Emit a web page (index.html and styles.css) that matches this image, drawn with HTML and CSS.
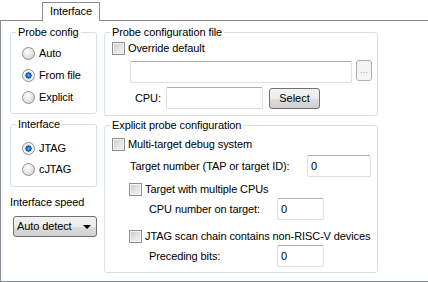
FILE: index.html
```html
<!DOCTYPE html>
<html lang="en">
<head>
    <meta charset="UTF-8">
    <title>Interface</title>
    <link rel="stylesheet" href="styles.css">
</head>
<body>
    <div class="tabbar">
        <div class="tab-gap"></div>
        <div class="tab">Interface</div>
        <div class="tab-fill"></div>
    </div>
    <div class="panel">
        <div class="col-left">
            <fieldset class="group probe-config">
                <legend>Probe config</legend>
                <label class="radio-row"><input type="radio" name="cfg" class="radio">Auto</label>
                <label class="radio-row"><input type="radio" name="cfg" class="radio" checked>From file</label>
                <label class="radio-row"><input type="radio" name="cfg" class="radio">Explicit</label>
            </fieldset>
            <fieldset class="group iface">
                <legend>Interface</legend>
                <label class="radio-row short"><input type="radio" name="iface" class="radio" checked>JTAG</label>
                <label class="radio-row short"><input type="radio" name="iface" class="radio">cJTAG</label>
            </fieldset>
            <div class="speed-label">Interface speed</div>
            <div class="dropdown">
                <span>Auto detect</span>
                <span class="arrow"></span>
            </div>
        </div>
        <div class="col-right">
            <fieldset class="group file-group">
                <legend>Probe configuration file</legend>
                <label class="check-row override"><input type="checkbox" class="check">Override default</label>
                <div class="path-row">
                    <input type="text" class="textbox path">
                    <button type="button" class="btn dots">...</button>
                </div>
                <div class="cpu-row">
                    <span class="cpu-label">CPU:</span>
                    <input type="text" class="textbox cpu">
                    <button type="button" class="btn select-btn">Select</button>
                </div>
            </fieldset>
            <fieldset class="group explicit-group">
                <legend>Explicit probe configuration</legend>
                <label class="check-row multi"><input type="checkbox" class="check">Multi-target debug system</label>
                <div class="field-row target-num">
                    <span class="field-label">Target number (TAP or target ID):</span>
                    <input type="text" class="textbox num wide" value="0">
                </div>
                <label class="check-row sub first-sub"><input type="checkbox" class="check">Target with multiple CPUs</label>
                <div class="field-row sub-field">
                    <span class="field-label">CPU number on target:</span>
                    <input type="text" class="textbox num" value="0">
                </div>
                <label class="check-row sub second-sub"><input type="checkbox" class="check">JTAG scan chain contains non-RISC-V devices</label>
                <div class="field-row sub-field">
                    <span class="field-label">Preceding bits:</span>
                    <input type="text" class="textbox num" value="0">
                </div>
            </fieldset>
        </div>
    </div>
</body>
</html>
```
FILE: styles.css
```css
body {
    margin: 0;
    width: 428px;
    height: 282px;
    overflow: hidden;
    background: #fff;
    font-family: "Liberation Sans", Arial, sans-serif;
    font-size: 11px;
    line-height: 13px;
    letter-spacing: -0.1px;
    color: #000;
}

* {
    box-sizing: border-box;
}

/* tab strip */
.tabbar {
    display: flex;
    height: 21px;
}

.tab-gap {
    width: 42px;
    border-bottom: 1px solid #898c95;
}

.tab {
    margin-top: 2px;
    width: 58px;
    height: 19px;
    border: 1px solid #898c95;
    border-bottom: none;
    text-align: center;
    line-height: 17px;
    background: #fff;
}

.tab-fill {
    flex: 1;
    border-bottom: 1px solid #898c95;
}

.panel {
    display: flex;
    height: 261px;
    padding-left: 9px;
    border-left: 1px solid #898c95;
    border-bottom: 1px solid #898c95;
}

.col-left {
    width: 87px;
    margin-right: 7px;
}

.col-right {
    width: 274px;
}

/* group boxes */
.group {
    margin: 0;
    padding: 0;
    border: 1px solid #d5dfe5;
    border-radius: 3px;
    min-width: 0;
}

.group legend {
    margin-left: 5px;
    padding: 0 2px;
    line-height: 13px;
}

.probe-config {
    margin-top: 5px;
    padding: 3px 0 5px 0;
}

.iface {
    margin-top: 4px;
    padding: 7px 0 6px 0;
}

.radio-row {
    display: flex;
    align-items: center;
    height: 22px;
    padding-left: 11px;
}

.radio-row.short {
    height: 21px;
}

.radio {
    appearance: none;
    -webkit-appearance: none;
    width: 13px;
    height: 13px;
    margin: 0 4px 0 0;
    border-radius: 50%;
    border: 1px solid #8f9093;
    background: radial-gradient(circle at 40% 35%, #fefefe 0%, #e8e8e8 45%, #c9c9c9 100%);
}

.radio:checked {
    background: radial-gradient(circle at 50% 50%, #6fb2e8 0%, #1d66b5 28%, #0c4e97 38%, #e4e4e4 42%, #f6f6f6 65%, #cfcfcf 100%);
}

.speed-label {
    margin-top: 9px;
}

.dropdown {
    display: flex;
    align-items: center;
    justify-content: space-between;
    margin: 7px 0 0 3px;
    width: 84px;
    height: 21px;
    padding: 0 5px 0 3px;
    border: 1px solid #707070;
    border-radius: 3px;
    background: linear-gradient(#f2f2f2 0%, #ebebeb 50%, #dddddd 51%, #cfcfcf 100%);
}

.arrow {
    width: 0;
    height: 0;
    border-left: 4px solid transparent;
    border-right: 4px solid transparent;
    border-top: 4px solid #000;
}

/* right side */
.file-group {
    margin-top: 5px;
    padding: 2px 0 6px 0;
}

.explicit-group {
    margin-top: 3px;
    padding: 5px 0 5px 0;
}

.check-row {
    display: flex;
    align-items: center;
    height: 14px;
}

.check {
    appearance: none;
    -webkit-appearance: none;
    width: 13px;
    height: 13px;
    margin: 0 3px 0 0;
    border: 1px solid #8e8f8f;
    background: linear-gradient(135deg, #cbcbcb 0%, #e2e2e2 50%, #f4f4f4 100%);
    box-shadow: inset 0 0 0 1px #f4f4f4;
}

.override {
    margin-left: 7px;
}

.multi {
    margin-left: 7px;
}

.sub {
    margin-left: 24px;
}

.first-sub {
    margin-top: 5px;
}

.second-sub {
    margin-top: 9px;
}

.textbox {
    height: 22px;
    margin: 0;
    padding: 0 3px;
    border: 1px solid #dbdfe6;
    border-top-color: #abadb3;
    border-radius: 2px;
    background: #fff;
    font: inherit;
    outline: none;
}

.path-row {
    display: flex;
    align-items: flex-start;
    margin: 5px 0 0 25px;
}

.path {
    margin-top: 1px;
    width: 222px;
}

.btn {
    margin: 0;
    padding: 0;
    border: 1px solid #707070;
    border-radius: 3px;
    background: linear-gradient(#f2f2f2 0%, #ebebeb 50%, #dddddd 51%, #cfcfcf 100%);
    font: inherit;
    color: #000;
}

.dots {
    margin-left: 4px;
    width: 16px;
    height: 21px;
    border-color: #adb2b5;
    background: #f4f4f4;
    color: #a0a0a0;
    font-size: 9px;
    line-height: 17px;
}

.cpu-row {
    display: flex;
    align-items: center;
    margin-top: 4px;
}

.cpu-label {
    margin-left: 30px;
    width: 31px;
}

.cpu {
    width: 97px;
}

.select-btn {
    margin-left: 6px;
    width: 51px;
    height: 21px;
}

.field-row {
    display: flex;
    align-items: center;
    margin-top: 2px;
}

.target-num {
    margin: 4px 0 0 25px;
}

.target-num .field-label {
    width: 177px;
}

.sub-field {
    margin-left: 44px;
}

.sub-field .field-label {
    width: 128px;
}

.num {
    width: 47px;
}

.num.wide {
    width: 64px;
}
```
